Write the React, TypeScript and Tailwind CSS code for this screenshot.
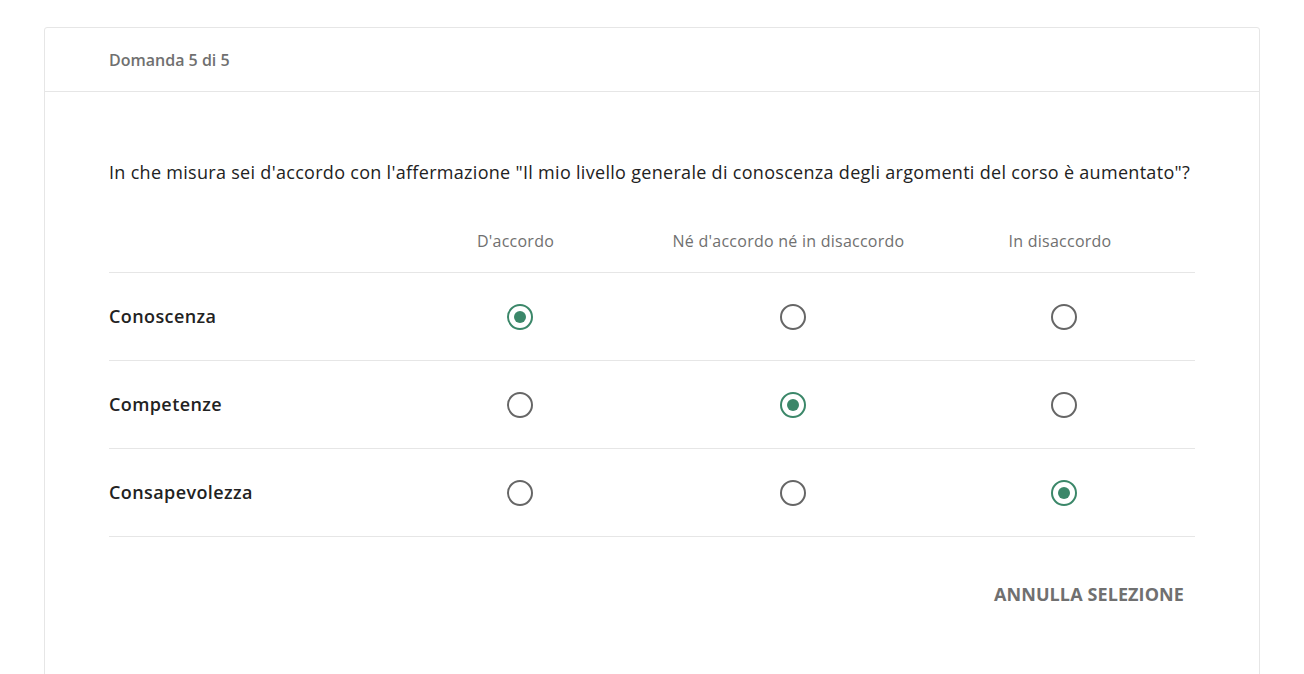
type Row = { label: string; selected: number };

const columns = ["D'accordo", "Né d'accordo né in disaccordo", "In disaccordo"];

const rows: Row[] = [
  { label: "Conoscenza", selected: 0 },
  { label: "Competenze", selected: 1 },
  { label: "Consapevolezza", selected: 2 },
];

function Radio({ checked }: { checked: boolean }) {
  return (
    <span
      className={
        checked
          ? "ml-2 flex h-[26px] w-[26px] items-center justify-center rounded-full border-2 border-[#3b8769]"
          : "ml-2 flex h-[26px] w-[26px] items-center justify-center rounded-full border-2 border-[#666666]"
      }
    >
      {checked && <span className="h-[12px] w-[12px] rounded-full bg-[#3b8769]" />}
    </span>
  );
}

export default function App() {
  return (
    <div className="min-h-[674px] bg-white pt-[27px] font-['Open_Sans',sans-serif]">
      <div className="mx-[44px] h-[660px] rounded-t-[3px] border border-[#e6e6e6] bg-white">
        <div className="flex h-[64px] items-center border-b border-[#e6e6e6] px-[64px]">
          <span className="text-[16px] font-semibold text-[#707070]">Domanda 5 di 5</span>
        </div>
        <div className="px-[64px] pt-[68px]">
          <p className="text-[18px] leading-[24px] tracking-[0.3px] text-[#222222]">
            In che misura sei d'accordo con l'affermazione "Il mio livello generale di conoscenza degli argomenti del
            corso è aumentato"?
          </p>
          <div className="mt-[25px]">
            <div className="grid h-[64px] grid-cols-[270px_273px_273px_1fr] items-center border-b border-[#e6e6e6]">
              <div />
              {columns.map((c) => (
                <div key={c} className="text-center text-[16px] tracking-[0.25px] text-[#707070]">
                  {c}
                </div>
              ))}
            </div>
            {rows.map((r) => (
              <div
                key={r.label}
                className="grid h-[88px] grid-cols-[270px_273px_273px_1fr] items-center border-b border-[#e6e6e6]"
              >
                <div className="text-[18px] font-semibold tracking-[0.4px] text-[#222222]">{r.label}</div>
                {columns.map((c, i) => (
                  <div key={c} className="flex justify-center">
                    <Radio checked={r.selected === i} />
                  </div>
                ))}
              </div>
            ))}
          </div>
          <div className="flex justify-end pr-[11px] pt-[44px]">
            <button className="text-[18px] font-bold tracking-[0.1px] text-[#707070]">ANNULLA SELEZIONE</button>
          </div>
        </div>
      </div>
    </div>
  );
}
